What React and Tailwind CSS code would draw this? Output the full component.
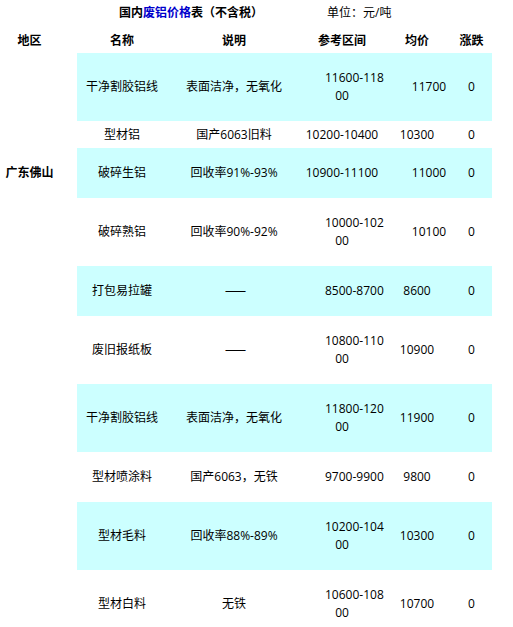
import React from "react";

const rows = [
  { name: "干净割胶铝线", desc: "表面洁净，无氧化", r1: "11600-118", r2: "00", avg: "11700", avgShift: true, cyan: true, h: "h-[68px]" },
  { name: "型材铝", desc: "国产6063旧料", r1: "10200-10400", avg: "10300", cyan: false, h: "h-[27px]", noShift: true },
  { name: "破碎生铝", desc: "回收率91%-93%", r1: "10900-11100", avg: "11000", avgShift: true, cyan: true, h: "h-[50px]", noShift: true },
  { name: "破碎熟铝", desc: "回收率90%-92%", r1: "10000-102", r2: "00", avg: "10100", avgShift: true, cyan: false, h: "h-[68px]" },
  { name: "打包易拉罐", desc: "——", dash: true, r1: "8500-8700", avg: "8600", cyan: true, h: "h-[50px]" },
  { name: "废旧报纸板", desc: "——", dash: true, r1: "10800-110", r2: "00", avg: "10900", cyan: false, h: "h-[68px]" },
  { name: "干净割胶铝线", desc: "表面洁净，无氧化", r1: "11800-120", r2: "00", avg: "11900", cyan: true, h: "h-[68px]" },
  { name: "型材喷涂料", desc: "国产6063，无铁", r1: "9700-9900", avg: "9800", cyan: false, h: "h-[50px]" },
  { name: "型材毛料", desc: "回收率88%-89%", r1: "10200-104", r2: "00", avg: "10300", cyan: true, h: "h-[68px]" },
  { name: "型材白料", desc: "无铁", r1: "10600-108", r2: "00", avg: "10700", cyan: false, h: "h-[68px]" },
];

export default function App() {
  return (
    <div
      className="w-[513px] h-[627px] overflow-hidden bg-white text-black text-[12px]"
      style={{ fontFamily: '"Open Sans", "Noto Sans CJK SC", sans-serif' }}
    >
      {/* Title */}
      <div className="flex items-center h-[26px] pl-[119px] gap-[64px] leading-[16px]">
        <div className="font-bold">
          国内<span className="text-[#0000cc]">废铝价格</span>表（不含税）
        </div>
        <div>单位：元/吨</div>
      </div>

      {/* Header */}
      <div className="grid grid-cols-[77px_90px_134px_82px_68px_41px] h-[27px] pt-[2px] items-center font-bold text-center leading-[16px]">
        <div className="pr-[18px]">地区</div>
        <div>名称</div>
        <div>说明</div>
        <div>参考区间</div>
        <div>均价</div>
        <div>涨跌</div>
      </div>

      {/* Body */}
      <div className="flex">
        <div className="w-[77px] shrink-0 pr-[18px] pt-[112px] text-center font-bold leading-[16px]">
          广东佛山
        </div>
        <div className="w-[415px] flex flex-col">
          {rows.map((r, i) => (
            <div
              key={i}
              className={`grid grid-cols-[90px_134px_82px_68px_41px] items-center text-center ${r.h} ${
                r.cyan ? "bg-[#ccffff]" : "bg-white"
              }`}
            >
              <div className="leading-[16px]">{r.name}</div>
              <div className={`leading-[16px] ${r.dash ? "tracking-[-3px]" : ""}`}>{r.desc}</div>
              <div className="leading-[18px] whitespace-nowrap">
                <div className={r.noShift ? "" : "pl-[24px]"}>{r.r1}</div>
                {r.r2 && <div>{r.r2}</div>}
              </div>
              <div className={`leading-[16px] ${r.avgShift ? "pl-[24px]" : ""}`}>{r.avg}</div>
              <div className="leading-[16px]">0</div>
            </div>
          ))}
        </div>
      </div>
    </div>
  );
}
